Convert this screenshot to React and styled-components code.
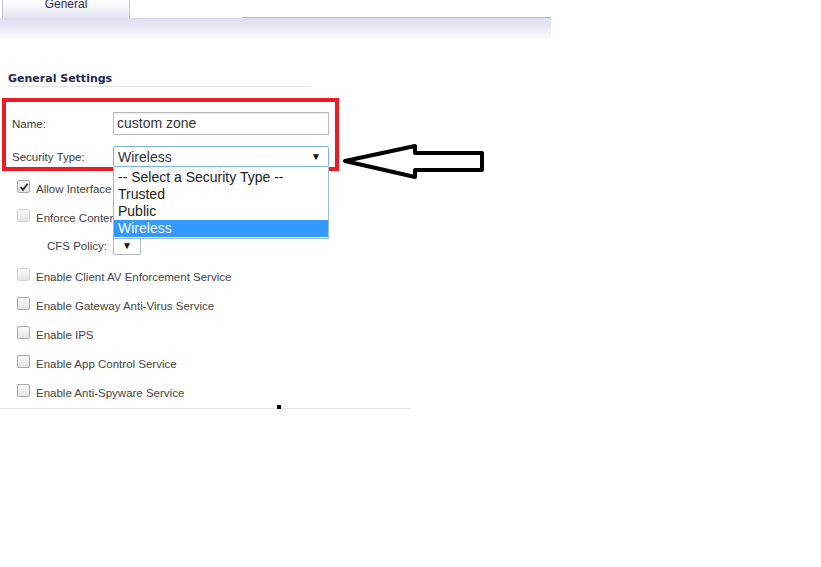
import React from 'react';
import styled, { createGlobalStyle } from 'styled-components';

const GlobalStyle = createGlobalStyle`
  html, body {
    margin: 0;
    padding: 0;
    background: #ffffff;
  }
  body {
    font-family: 'Liberation Sans', Arial, sans-serif;
    color: #333333;
  }
`;

const Page = styled.div`
  position: relative;
  width: 821px;
  height: 567px;
`;

const Panel = styled.div`
  width: 551px;
`;

const TabBar = styled.div`
  display: flex;
  align-items: flex-end;
  height: 18px;
`;

const Tab = styled.div`
  width: 126px;
  height: 18px;
  margin-left: 2px;
  border-left: 1px solid #c4c6d4;
  border-right: 1px solid #c4c6d4;
  background: linear-gradient(to bottom, #ffffff 0%, #f2f3f9 55%, #e2e4f1 100%);
  display: flex;
  justify-content: center;
  align-items: flex-start;
  font-size: 12px;
  line-height: 8px;
  color: #2b2b50;
  overflow: hidden;
`;

const TabRule = styled.div`
  flex: 1;
  margin-left: 112px;
  height: 1px;
  background: #b4b7c9;
`;

const Band = styled.div`
  height: 22px;
  background: linear-gradient(to bottom, #dcdef0 0%, #e9eaf5 45%, #ffffff 100%);
`;

const Section = styled.div`
  padding-top: 33px;
`;

const SectionTitle = styled.h3`
  margin: 0 0 0 8px;
  width: 303px;
  padding-bottom: 1px;
  border-bottom: 1px solid #e2e2e8;
  font-family: 'DejaVu Sans', Verdana, sans-serif;
  font-size: 11px;
  line-height: 12px;
  font-weight: 700;
  color: #23264f;
`;

const Highlight = styled.div`
  box-sizing: border-box;
  width: 337px;
  height: 73px;
  margin: 11px 0 0 2px;
  padding: 10px 0 0 6px;
  border: 4px solid #ec1c24;
  display: flex;
  flex-direction: column;
  gap: 11px;
`;

const FieldRow = styled.div`
  display: flex;
  align-items: center;
  font-size: 11.5px;
  color: #3a3a3a;
`;

const FieldLabel = styled.span`
  width: 101px;
  flex-shrink: 0;
`;

const TextInput = styled.div`
  box-sizing: border-box;
  width: 216px;
  height: 23px;
  padding: 0 3px;
  border: 1px solid #b9b9b9;
  box-shadow: inset 0 1px 1px rgba(0, 0, 0, 0.08);
  font-size: 14px;
  line-height: 20px;
  color: #333;
`;

const SelectWrap = styled.div`
  position: relative;
`;

const Select = styled.div`
  box-sizing: border-box;
  width: ${(p) => p.$w}px;
  height: ${(p) => p.$h}px;
  padding: 0 4px;
  border: 1px solid ${(p) => (p.$focus ? '#7fb2e6' : '#b5b5b5')};
  border-radius: 2px;
  display: flex;
  align-items: center;
  justify-content: space-between;
  font-size: 14px;
  color: #333;
  background: #fff;
`;

const Caret = styled.span`
  font-size: 10px;
  color: #111;
  margin-left: auto;
  padding-right: ${(p) => p.$pr || 3}px;
`;

const Options = styled.ul`
  position: absolute;
  top: 100%;
  left: 0;
  z-index: 2;
  box-sizing: border-box;
  width: 216px;
  margin: 0;
  padding: 2px 0 1px;
  list-style: none;
  background: #fff;
  border: 1px solid #9db6d6;
  border-top: none;
`;

const Option = styled.li`
  height: 17px;
  padding-left: 4px;
  font-size: 14px;
  line-height: 17px;
  color: ${(p) => (p.$active ? '#ffffff' : '#222')};
  background: ${(p) => (p.$active ? '#3399ff' : 'transparent')};
`;

const CheckList = styled.div`
  padding-top: 3px;
`;

const CheckRow = styled.div`
  display: flex;
  align-items: center;
  height: ${(p) => p.$h || 29}px;
  margin-top: ${(p) => p.$mt || 0}px;
  padding-left: ${(p) => p.$indent || 17}px;
  font-size: 11.5px;
  color: #444;
`;

const Box = styled.span`
  box-sizing: border-box;
  width: 13px;
  height: 13px;
  margin-right: 6px;
  margin-top: -4px;
  border: 1px solid ${(p) => (p.$dim ? '#d6d6d6' : '#a8a8a8')};
  border-radius: 2px;
  background: linear-gradient(to bottom, #fafafa, #e4e4e4);
  display: flex;
  align-items: center;
  justify-content: center;
`;

const PolicyLabel = styled.span`
  width: 66px;
  flex-shrink: 0;
`;

const Footer = styled.div`
  position: relative;
  width: 411px;
  height: 1px;
  margin-top: 1px;
  background: #e2e2e2;
`;

const Cursor = styled.span`
  position: absolute;
  left: 277px;
  bottom: 0;
  width: 4px;
  height: 4px;
  background: #000;
`;

const Arrow = styled.svg`
  position: absolute;
  left: 343px;
  top: 141px;
`;

const Check = () => (
  <svg width="10" height="10" viewBox="0 0 10 10">
    <path d="M1.5 5.2 L4 7.8 L8.6 1.8" fill="none" stroke="#333" strokeWidth="1.8" />
  </svg>
);

const services = [
  { label: 'Enable Client AV Enforcement Service', dim: true },
  { label: 'Enable Gateway Anti-Virus Service' },
  { label: 'Enable IPS' },
  { label: 'Enable App Control Service' },
  { label: 'Enable Anti-Spyware Service' },
];

const zoneTypes = ['-- Select a Security Type --', 'Trusted', 'Public', 'Wireless'];

export default function App() {
  return (
    <Page>
      <GlobalStyle />
      <Panel>
        <TabBar>
          <Tab>General</Tab>
          <TabRule />
        </TabBar>
        <Band />
        <Section>
          <SectionTitle>General Settings</SectionTitle>
          <Highlight>
            <FieldRow>
              <FieldLabel>Name:</FieldLabel>
              <TextInput>custom zone</TextInput>
            </FieldRow>
            <FieldRow>
              <FieldLabel>Security Type:</FieldLabel>
              <SelectWrap>
                <Select $w={216} $h={21} $focus>
                  Wireless
                  <Caret>▼</Caret>
                </Select>
                <Options>
                  {zoneTypes.map((t) => (
                    <Option key={t} $active={t === 'Wireless'}>
                      {t}
                    </Option>
                  ))}
                </Options>
              </SelectWrap>
            </FieldRow>
          </Highlight>
          <CheckList>
            <CheckRow>
              <Box>
                <Check />
              </Box>
              Allow Interface Trust
            </CheckRow>
            <CheckRow>
              <Box $dim />
              Enforce Content Filtering Service
            </CheckRow>
            <CheckRow $h={27} $indent={47}>
              <PolicyLabel>CFS Policy:</PolicyLabel>
              <Select $w={28} $h={19}>
                <Caret $pr={4}>▼</Caret>
              </Select>
            </CheckRow>
            {services.map((s, i) => (
              <CheckRow key={s.label} $mt={i === 0 ? 3 : 0}>
                <Box $dim={s.dim} />
                {s.label}
              </CheckRow>
            ))}
          </CheckList>
          <Footer>
            <Cursor />
          </Footer>
        </Section>
      </Panel>
      <Arrow width="142" height="41" viewBox="0 0 142 41">
        <path
          d="M2 20 L72 5 L72 12 L139 12 L139 29 L72 29 L72 36 Z"
          fill="#fff"
          stroke="#000"
          strokeWidth="4"
          strokeLinejoin="round"
        />
      </Arrow>
    </Page>
  );
}
